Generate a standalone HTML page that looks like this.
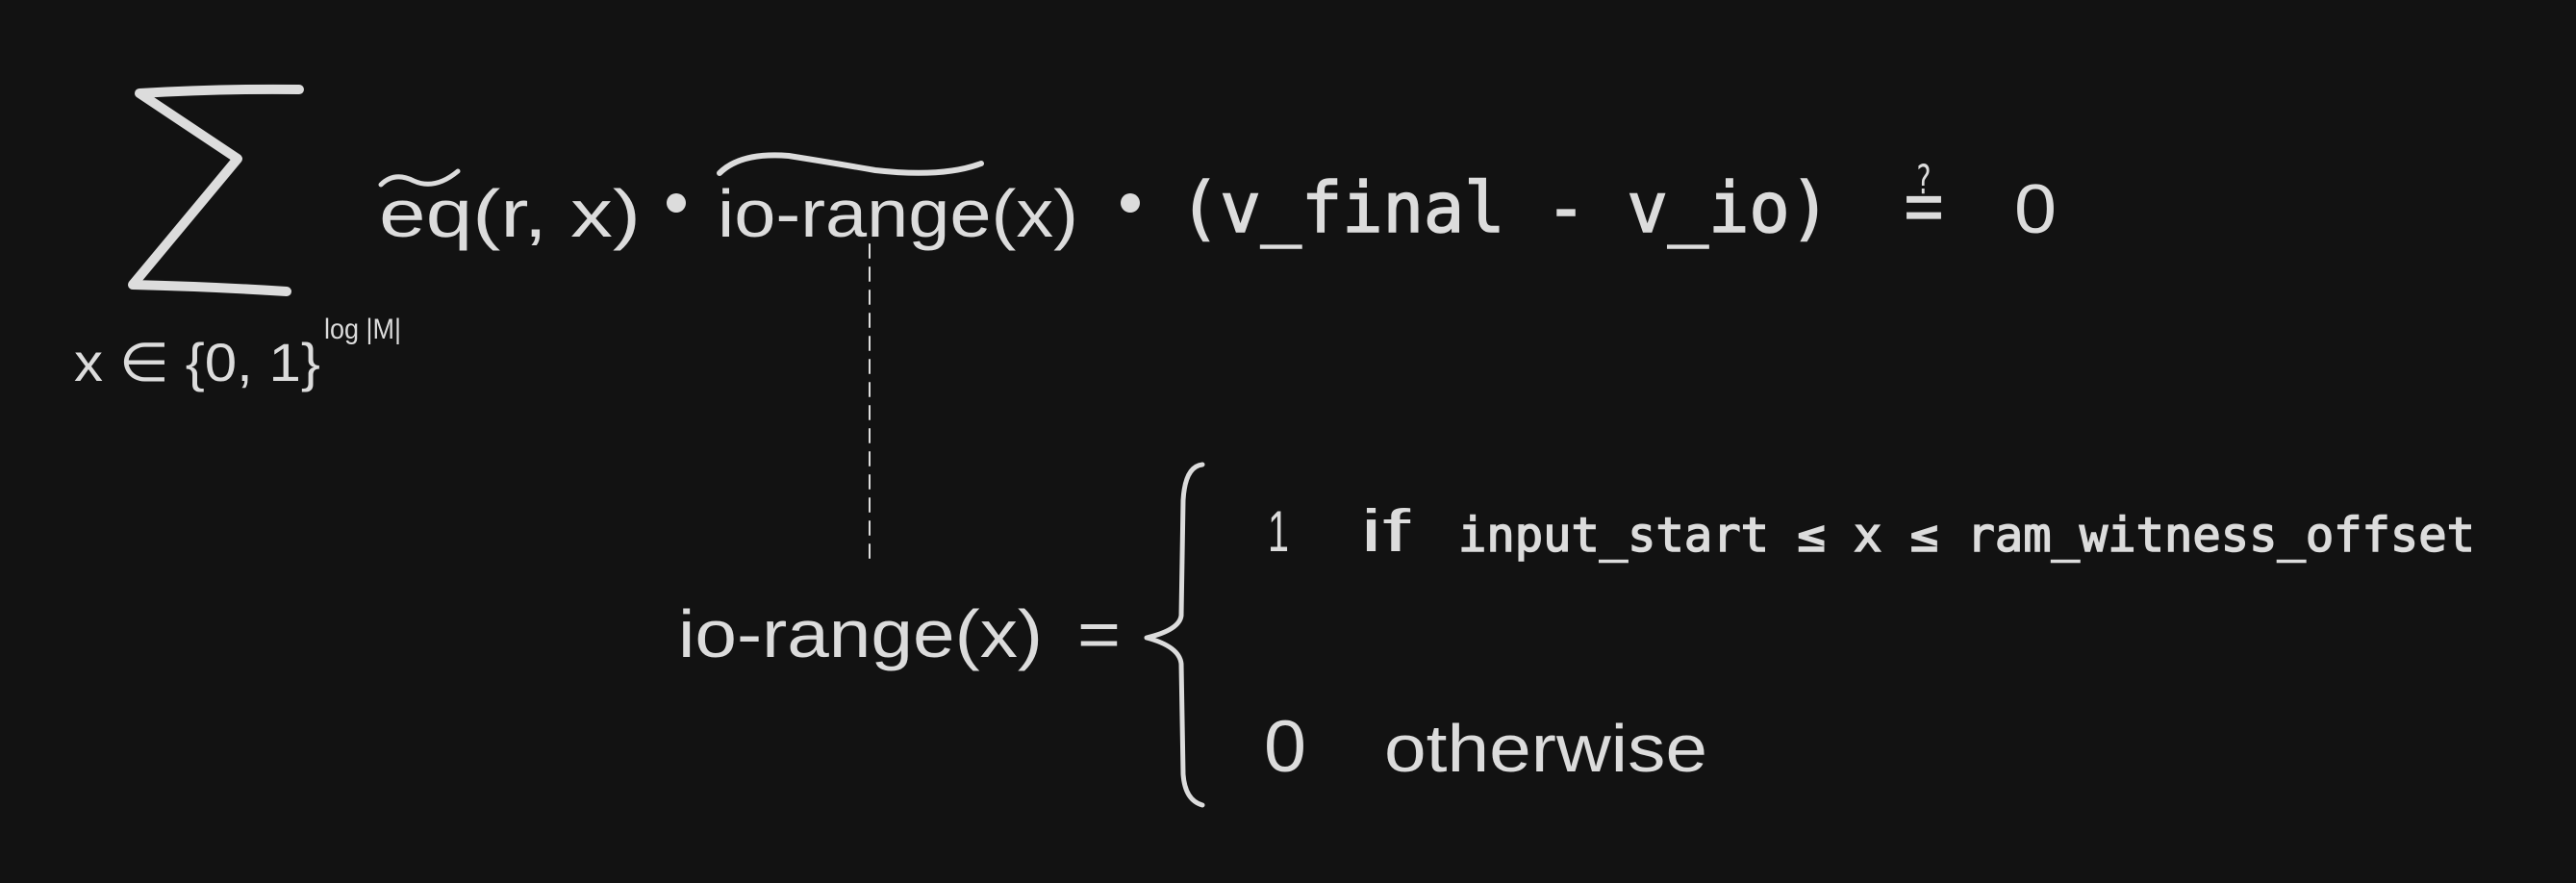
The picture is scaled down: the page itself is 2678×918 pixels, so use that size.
<!DOCTYPE html>
<html><head><meta charset="utf-8"><style>
html,body{margin:0;padding:0;background:#121212;}
svg{display:block}
.h{font-family:"Liberation Sans",sans-serif;fill:#dcdcdc;}
.m{font-family:"DejaVu Sans Mono","Liberation Mono",monospace;fill:#dcdcdc;stroke:#dcdcdc;stroke-width:1.6;}
</style></head><body>
<svg width="2678" height="918" viewBox="0 0 2678 918" xmlns="http://www.w3.org/2000/svg">
<rect width="2678" height="918" fill="#121212"/>
<g fill="none" stroke="#dcdcdc" stroke-linecap="round" stroke-linejoin="round">
<path d="M311 93 Q230 92 145 97 L247 165 L138 296 Q220 298 298 303" stroke-width="10"/>
<path d="M396 192 Q410 178 430 188 Q452 198 476 178" stroke-width="5"/>
<path d="M748 180 Q770 158 820 162 Q870 170 910 177 Q980 185 1020 170" stroke-width="6"/>
<path d="M904 254 L904 581" stroke-width="2" stroke-dasharray="14 10"/>
<path d="M1250 483 Q1232 485 1230 520 L1228 640 Q1226 655 1192 663 Q1226 672 1228 690 L1230 805 Q1232 832 1250 837" stroke-width="5"/>
</g>
<text class="h" x="394" y="246" font-size="70" textLength="272" lengthAdjust="spacingAndGlyphs">eq(r, x)</text>
<circle cx="703" cy="211" r="10" fill="#dcdcdc"/>
<text class="h" x="746" y="246" font-size="70" textLength="375" lengthAdjust="spacingAndGlyphs">io-range(x)</text>
<circle cx="1175" cy="211" r="10" fill="#dcdcdc"/>
<text class="m" x="1226" y="241" font-size="72" textLength="677" lengthAdjust="spacingAndGlyphs">(v_final - v_io)</text>
<text class="h" x="1976" y="242" font-size="84" textLength="48" lengthAdjust="spacingAndGlyphs">≟</text>
<text class="h" x="2094" y="242" font-size="72" textLength="44" lengthAdjust="spacingAndGlyphs">0</text>
<text class="h" x="77" y="396" font-size="56" textLength="256" lengthAdjust="spacingAndGlyphs">x ∈ {0, 1}</text>
<text class="h" x="337" y="352" font-size="30" textLength="80" lengthAdjust="spacingAndGlyphs">log |M|</text>
<text class="h" x="705" y="683" font-size="70" textLength="379" lengthAdjust="spacingAndGlyphs">io-range(x)</text>
<text class="h" x="1120" y="683" font-size="70" textLength="45" lengthAdjust="spacingAndGlyphs">=</text>
<text class="h" x="1318" y="573" font-size="60" textLength="22" lengthAdjust="spacingAndGlyphs">1</text>
<text class="h" x="1414" y="573" font-size="62" textLength="52" lengthAdjust="spacingAndGlyphs">if</text>
<text class="m" x="1516" y="573" font-size="49" textLength="1057" lengthAdjust="spacingAndGlyphs">input_start ≤ x ≤ ram_witness_offset</text>
<text class="h" x="1314" y="802" font-size="76" textLength="44" lengthAdjust="spacingAndGlyphs">0</text>
<text class="h" x="1439" y="802" font-size="70" textLength="336" lengthAdjust="spacingAndGlyphs">otherwise</text>
</svg>
</body></html>
